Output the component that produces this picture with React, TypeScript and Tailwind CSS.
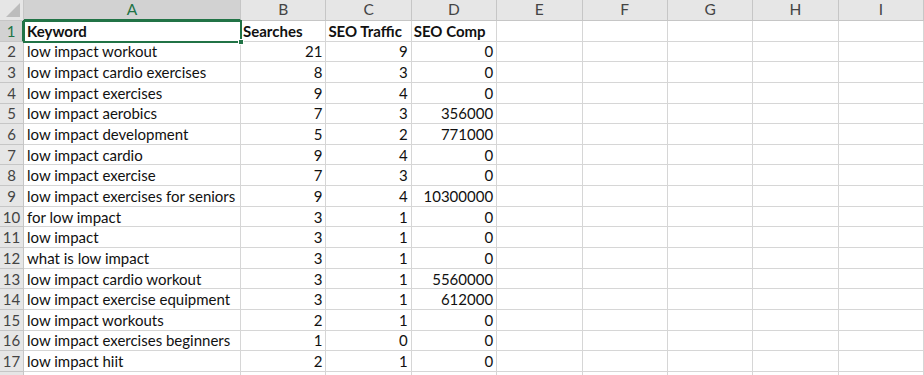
import React from "react";

const rows: [string, string, string, string][] = [
  ["low impact workout", "21", "9", "0"],
  ["low impact cardio exercises", "8", "3", "0"],
  ["low impact exercises", "9", "4", "0"],
  ["low impact aerobics", "7", "3", "356000"],
  ["low impact development", "5", "2", "771000"],
  ["low impact cardio", "9", "4", "0"],
  ["low impact exercise", "7", "3", "0"],
  ["low impact exercises for seniors", "9", "4", "10300000"],
  ["for low impact", "3", "1", "0"],
  ["low impact", "3", "1", "0"],
  ["what is low impact", "3", "1", "0"],
  ["low impact cardio workout", "3", "1", "5560000"],
  ["low impact exercise equipment", "3", "1", "612000"],
  ["low impact workouts", "2", "1", "0"],
  ["low impact exercises beginners", "1", "0", "0"],
  ["low impact hiit", "2", "1", "0"],
];

const cols = ["A", "B", "C", "D", "E", "F", "G", "H", "I"];

const cell =
  "border-r border-b border-[#d6d6d6] bg-white flex items-center pt-[1px] overflow-hidden whitespace-nowrap";
const rowHead =
  "border-r border-b border-[#c6c6c6] bg-[#e6e6e6] flex items-center justify-center pt-[1px] text-[#444]";

export default function App() {
  return (
    <div
      className="relative w-[924px] h-[375px] overflow-hidden bg-white text-[15px] leading-none text-[#111]"
      style={{ fontFamily: "Lato, 'Open Sans', sans-serif" }}
    >
      <div className="grid grid-cols-[24px_217px_repeat(8,85.375px)] grid-rows-[21px] auto-rows-[20.65px]">
        {/* corner */}
        <div className="border-r border-b border-[#c6c6c6] bg-[#e6e6e6] flex items-end justify-end p-[3px]">
          <svg width="14" height="14" viewBox="0 0 14 14">
            <polygon points="14,0 14,14 0,14" fill="#bdbdbd" />
          </svg>
        </div>
        {cols.map((c) =>
          c === "A" ? (
            <div
              key={c}
              className="border-r border-[#c6c6c6] border-b-2 border-b-[#217346] bg-[#d2d2d2] flex items-center justify-center text-[15.5px] text-[#217346]"
            >
              {c}
            </div>
          ) : (
            <div
              key={c}
              className="border-r border-b border-[#c6c6c6] bg-[#e6e6e6] flex items-center justify-center text-[15.5px] text-[#444]"
            >
              {c}
            </div>
          )
        )}

        {/* row 1 */}
        <div className="border-r-2 border-r-[#217346] border-b border-[#c6c6c6] bg-[#d2d2d2] flex items-center justify-center pt-[1px] text-[#217346]">
          1
        </div>
        <div className={`${cell} pl-[3px] font-bold`}>Keyword</div>
        <div className={`${cell} pl-[2px] font-bold`}>Searches</div>
        <div className={`${cell} pl-[2px] font-bold`}>SEO Traffic</div>
        <div className={`${cell} pl-[2px] font-bold`}>SEO Comp</div>
        {cols.slice(4).map((c) => (
          <div key={c} className={cell} />
        ))}

        {rows.map((r, i) => (
          <React.Fragment key={i}>
            <div className={rowHead}>{i + 2}</div>
            <div className={`${cell} pl-[3px]`}>{r[0]}</div>
            <div className={`${cell} justify-end pr-[3px]`}>{r[1]}</div>
            <div className={`${cell} justify-end pr-[3px]`}>{r[2]}</div>
            <div className={`${cell} justify-end pr-[3px]`}>{r[3]}</div>
            {cols.slice(4).map((c) => (
              <div key={c} className={cell} />
            ))}
          </React.Fragment>
        ))}

        <div className={rowHead} />
        {cols.map((c) => (
          <div key={c} className={cell} />
        ))}
      </div>

      {/* selection over A1 */}
      <div className="absolute left-[23px] top-[20px] w-[219px] h-[23px] border-2 border-[#217346] pointer-events-none">
        <div className="absolute -right-[4px] -bottom-[4px] w-[6px] h-[6px] bg-[#217346] border border-white" />
      </div>
    </div>
  );
}
